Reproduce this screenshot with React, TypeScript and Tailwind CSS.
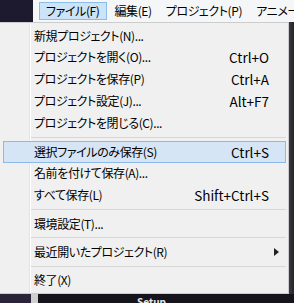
import React from 'react';

type Item =
  | { kind: 'item'; label: string; shortcut?: string; active?: boolean; submenu?: boolean }
  | { kind: 'sep' };

const items: Item[] = [
  { kind: 'item', label: '新規プロジェクト(N)...' },
  { kind: 'item', label: 'プロジェクトを開く(O)...', shortcut: 'Ctrl+O' },
  { kind: 'item', label: 'プロジェクトを保存(P)', shortcut: 'Ctrl+A' },
  { kind: 'item', label: 'プロジェクト設定(J)...', shortcut: 'Alt+F7' },
  { kind: 'item', label: 'プロジェクトを閉じる(C)...' },
  { kind: 'sep' },
  { kind: 'item', label: '選択ファイルのみ保存(S)', shortcut: 'Ctrl+S', active: true },
  { kind: 'item', label: '名前を付けて保存(A)...' },
  { kind: 'item', label: 'すべて保存(L)', shortcut: 'Shift+Ctrl+S' },
  { kind: 'sep' },
  { kind: 'item', label: '環境設定(T)...' },
  { kind: 'sep' },
  { kind: 'item', label: '最近開いたプロジェクト(R)', submenu: true },
  { kind: 'sep' },
  { kind: 'item', label: '終了(X)' },
];

const font = 'font-["Noto_Sans_CJK_JP","Noto_Sans",sans-serif] [font-feature-settings:"palt"]';

const App: React.FC = () => {
  return (
    <div className={`w-[294px] h-[303px] overflow-hidden flex flex-col bg-[#15141c] text-[12px] text-black ${font}`}>
      {/* menu bar */}
      <div className="h-[22px] flex shrink-0">
        <div className="w-[33px] bg-[#1d1a2f]" />
        <div className="flex-1 bg-[#f5f6f7] flex items-center pl-[6px] gap-[2px] whitespace-nowrap overflow-hidden tracking-[-0.4px]">
          <div className="h-[18px] px-[6px] flex items-center bg-[#cce4f7] border border-[#8cbdea]">ファイル(F)</div>
          <div className="h-[18px] px-[6px] flex items-center">編集(E)</div>
          <div className="h-[18px] px-[6px] flex items-center">プロジェクト(P)</div>
          <div className="h-[18px] px-[6px] flex items-center">アニメーション(A)</div>
        </div>
      </div>

      {/* dropdown + shadow */}
      <div className="flex h-[272px] shrink-0">
        <div className="w-[289px] border-t border-r border-b border-[#cccccc] py-[2px] pr-[2px] flex flex-col bg-[linear-gradient(to_right,#f0f0f0_29px,#e2e3e3_29px,#e2e3e3_30px,#ffffff_30px,#ffffff_31px,#f0f0f0_31px)]">
          {items.map((it, i) =>
            it.kind === 'sep' ? (
              <div key={i} className="h-[7px] flex items-center pl-[31px]">
                <div className="flex-1 h-px bg-[#d7d7d7]" />
              </div>
            ) : (
              <div
                key={i}
                className={`h-[22px] flex items-center whitespace-nowrap ml-[3px] pl-[30px] pr-[16px] border ${
                  it.active ? 'bg-[#d5e5f6] border-[#8db9e8]' : 'border-transparent'
                }`}
              >
                <span className="flex-1 tracking-[-0.4px]">{it.label}</span>
                {it.shortcut && <span className="text-[13.5px]">{it.shortcut}</span>}
                {it.submenu && (
                  <svg width="5" height="8" viewBox="0 0 5 8" className="mr-[-10px]">
                    <path d="M0 0 L5 4 L0 8 Z" fill="#222" />
                  </svg>
                )}
              </div>
            )
          )}
        </div>
        <div className="flex-1 bg-[linear-gradient(to_right,#3a3a3f,#24242a)]" />
      </div>

      {/* bottom strip */}
      <div className="flex-1 flex items-end text-[10px] leading-none font-bold text-[#e8e8e8]">
        <div className="w-[31px] h-full bg-[#2a2438]" />
        <div className="w-[7px] h-full bg-[#cfcfcf]" />
        <div className="ml-[99px] translate-y-[3px]">Setup</div>
      </div>
    </div>
  );
};

export default App;
